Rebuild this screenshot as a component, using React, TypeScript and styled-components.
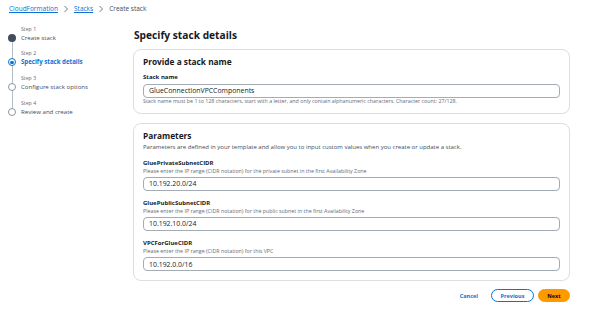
import styled, { createGlobalStyle } from 'styled-components';

const GlobalStyle = createGlobalStyle`
  body {
    margin: 0;
    background: #ffffff;
    font-family: "Open Sans", "Noto Sans", sans-serif;
    color: #16191f;
  }
`;

const Page = styled.div`
  width: 605px;
  height: 314px;
  overflow: hidden;
`;

const Breadcrumbs = styled.nav`
  display: flex;
  align-items: center;
  gap: 4px;
  height: 16px;
  padding: 0 0 0 9px;
  box-sizing: border-box;
  font-size: 6.5px;
  line-height: 16px;
  margin-top: 0.5px;
`;

const Crumb = styled.a`
  color: #0972d3;
  text-decoration: underline;
`;

const Current = styled.span`
  color: #414d5c;
`;

const Chevron = () => (
  <svg width="8" height="8" viewBox="0 0 8 8">
    <polyline points="2.5,1 5.5,4 2.5,7" fill="none" stroke="#5f6b7a" strokeWidth="0.9" />
  </svg>
);

const Layout = styled.div`
  display: grid;
  grid-template-columns: 133px 437px;
`;

const Steps = styled.ol`
  list-style: none;
  margin: 0;
  padding: 8px 0 0 8px;
`;

const Step = styled.li<{ $last?: boolean }>`
  position: relative;
  height: 24.8px;
  padding-left: 13px;

  &::after {
    content: '';
    display: ${p => (p.$last ? 'none' : 'block')};
    position: absolute;
    left: 3.5px;
    top: 13px;
    width: 1px;
    height: 24.8px;
    background: #b6bec9;
  }
`;

const StepNo = styled.div`
  font-size: 5.2px;
  color: #5f6b7a;
  line-height: 8px;
`;

const StepName = styled.div<{ $active?: boolean }>`
  font-size: 6.1px;
  line-height: 9px;
  color: ${p => (p.$active ? '#0972d3' : '#414d5c')};
  font-weight: ${p => (p.$active ? 700 : 400)};
`;

const Dot = styled.span<{ $kind: 'done' | 'active' | 'todo' }>`
  position: absolute;
  left: 0;
  top: 9px;
  width: 8px;
  height: 8px;
  box-sizing: border-box;
  border-radius: 50%;
  z-index: 1;
  background: ${p => (p.$kind === 'done' ? '#414d5c' : '#fff')};
  border: ${p =>
    p.$kind === 'done' ? 'none' : p.$kind === 'active' ? '1px solid #0972d3' : '1px solid #8c96a3'};
  ${p =>
    p.$kind === 'active' &&
    `&::before {
      content: '';
      position: absolute;
      left: 1.25px;
      top: 1.25px;
      width: 3.5px;
      height: 3.5px;
      border-radius: 50%;
      background: #0972d3;
    }`}
`;

const Main = styled.main`
  display: flex;
  flex-direction: column;
`;

const Title = styled.h1`
  margin: 10.5px 0 6px 1px;
  font-size: 10.2px;
  font-weight: 700;
  line-height: 16px;
`;

const Card = styled.section`
  border: 1px solid #dcdee2;
  border-radius: 8px;
  padding: 5px 9px 8.5px;
  margin-bottom: 9px;
  box-shadow: 0 0 1px rgba(0, 7, 22, 0.06);
`;

const CardTitle = styled.h2`
  margin: 0;
  font-size: 8.3px;
  font-weight: 700;
  line-height: 14px;
`;

const CardDesc = styled.p`
  margin: 0;
  font-size: 6px;
  line-height: 9px;
  color: #414d5c;
`;

const Field = styled.div<{ $gap: number }>`
  display: flex;
  flex-direction: column;
  margin-top: ${p => p.$gap}px;
`;

const Label = styled.label`
  font-size: 6px;
  font-weight: 700;
  line-height: 9px;
`;

const Hint = styled.span`
  font-size: 5.3px;
  line-height: 7px;
  color: #5f6b7a;
`;

const Input = styled.div`
  height: 14px;
  box-sizing: border-box;
  margin-top: 2px;
  border: 1px solid #a4abb5;
  border-radius: 4px;
  padding: 0 5px;
  display: flex;
  align-items: center;
  font-size: 6.9px;
  color: #16191f;
`;

const Footer = styled.div`
  display: flex;
  justify-content: flex-end;
  align-items: center;
  margin-top: -1px;
`;

const LinkButton = styled.button`
  background: none;
  border: none;
  color: #0972d3;
  font: 700 5.5px "Open Sans", sans-serif;
  padding: 0;
  margin-right: 13px;
`;

const PillButton = styled.button<{ $primary?: boolean }>`
  height: 13.5px;
  box-sizing: border-box;
  width: ${p => (p.$primary ? 32 : 43)}px;
  margin-left: ${p => (p.$primary ? 4 : 0)}px;
  padding: 0;
  border-radius: 7px;
  font: 700 5.5px "Open Sans", sans-serif;
  border: 1px solid ${p => (p.$primary ? '#ff9900' : '#0972d3')};
  background: ${p => (p.$primary ? '#ff9900' : '#fff')};
  color: ${p => (p.$primary ? '#000716' : '#0972d3')};
`;

const steps = [
  { no: 'Step 1', name: 'Create stack', kind: 'done' as const },
  { no: 'Step 2', name: 'Specify stack details', kind: 'active' as const },
  { no: 'Step 3', name: 'Configure stack options', kind: 'todo' as const },
  { no: 'Step 4', name: 'Review and create', kind: 'todo' as const },
];

const params = [
  {
    name: 'GluePrivateSubnetCIDR',
    hint: 'Please enter the IP range (CIDR notation) for the private subnet in the first Availability Zone',
    value: '10.192.20.0/24',
  },
  {
    name: 'GluePublicSubnetCIDR',
    hint: 'Please enter the IP range (CIDR notation) for the public subnet in the first Availability Zone',
    value: '10.192.10.0/24',
  },
  {
    name: 'VPCForGlueCIDR',
    hint: 'Please enter the IP range (CIDR notation) for this VPC',
    value: '10.192.0.0/16',
  },
];

export default function App() {
  return (
    <Page>
      <GlobalStyle />
      <Breadcrumbs>
        <Crumb>CloudFormation</Crumb>
        <Chevron />
        <Crumb>Stacks</Crumb>
        <Chevron />
        <Current>Create stack</Current>
      </Breadcrumbs>
      <Layout>
        <Steps>
          {steps.map((s, i) => (
            <Step key={s.no} $last={i === steps.length - 1}>
              <Dot $kind={s.kind} />
              <StepNo>{s.no}</StepNo>
              <StepName $active={s.kind === 'active'}>{s.name}</StepName>
            </Step>
          ))}
        </Steps>
        <Main>
          <Title>Specify stack details</Title>
          <Card>
            <CardTitle>Provide a stack name</CardTitle>
            <Field $gap={3.5}>
              <Label>Stack name</Label>
              <Input>GlueConnectionVPCComponents</Input>
              <Hint>
                Stack name must be 1 to 128 characters, start with a letter, and only contain alphanumeric
                characters. Character count: 27/128.
              </Hint>
            </Field>
          </Card>
          <Card>
            <CardTitle>Parameters</CardTitle>
            <CardDesc>
              Parameters are defined in your template and allow you to input custom values when you create or
              update a stack.
            </CardDesc>
            {params.map((p, i) => (
              <Field key={p.name} $gap={i === 0 ? 6.6 : 8.4}>
                <Label>{p.name}</Label>
                <Hint>{p.hint}</Hint>
                <Input>{p.value}</Input>
              </Field>
            ))}
          </Card>
          <Footer>
            <LinkButton>Cancel</LinkButton>
            <PillButton>Previous</PillButton>
            <PillButton $primary>Next</PillButton>
          </Footer>
        </Main>
      </Layout>
    </Page>
  );
}
